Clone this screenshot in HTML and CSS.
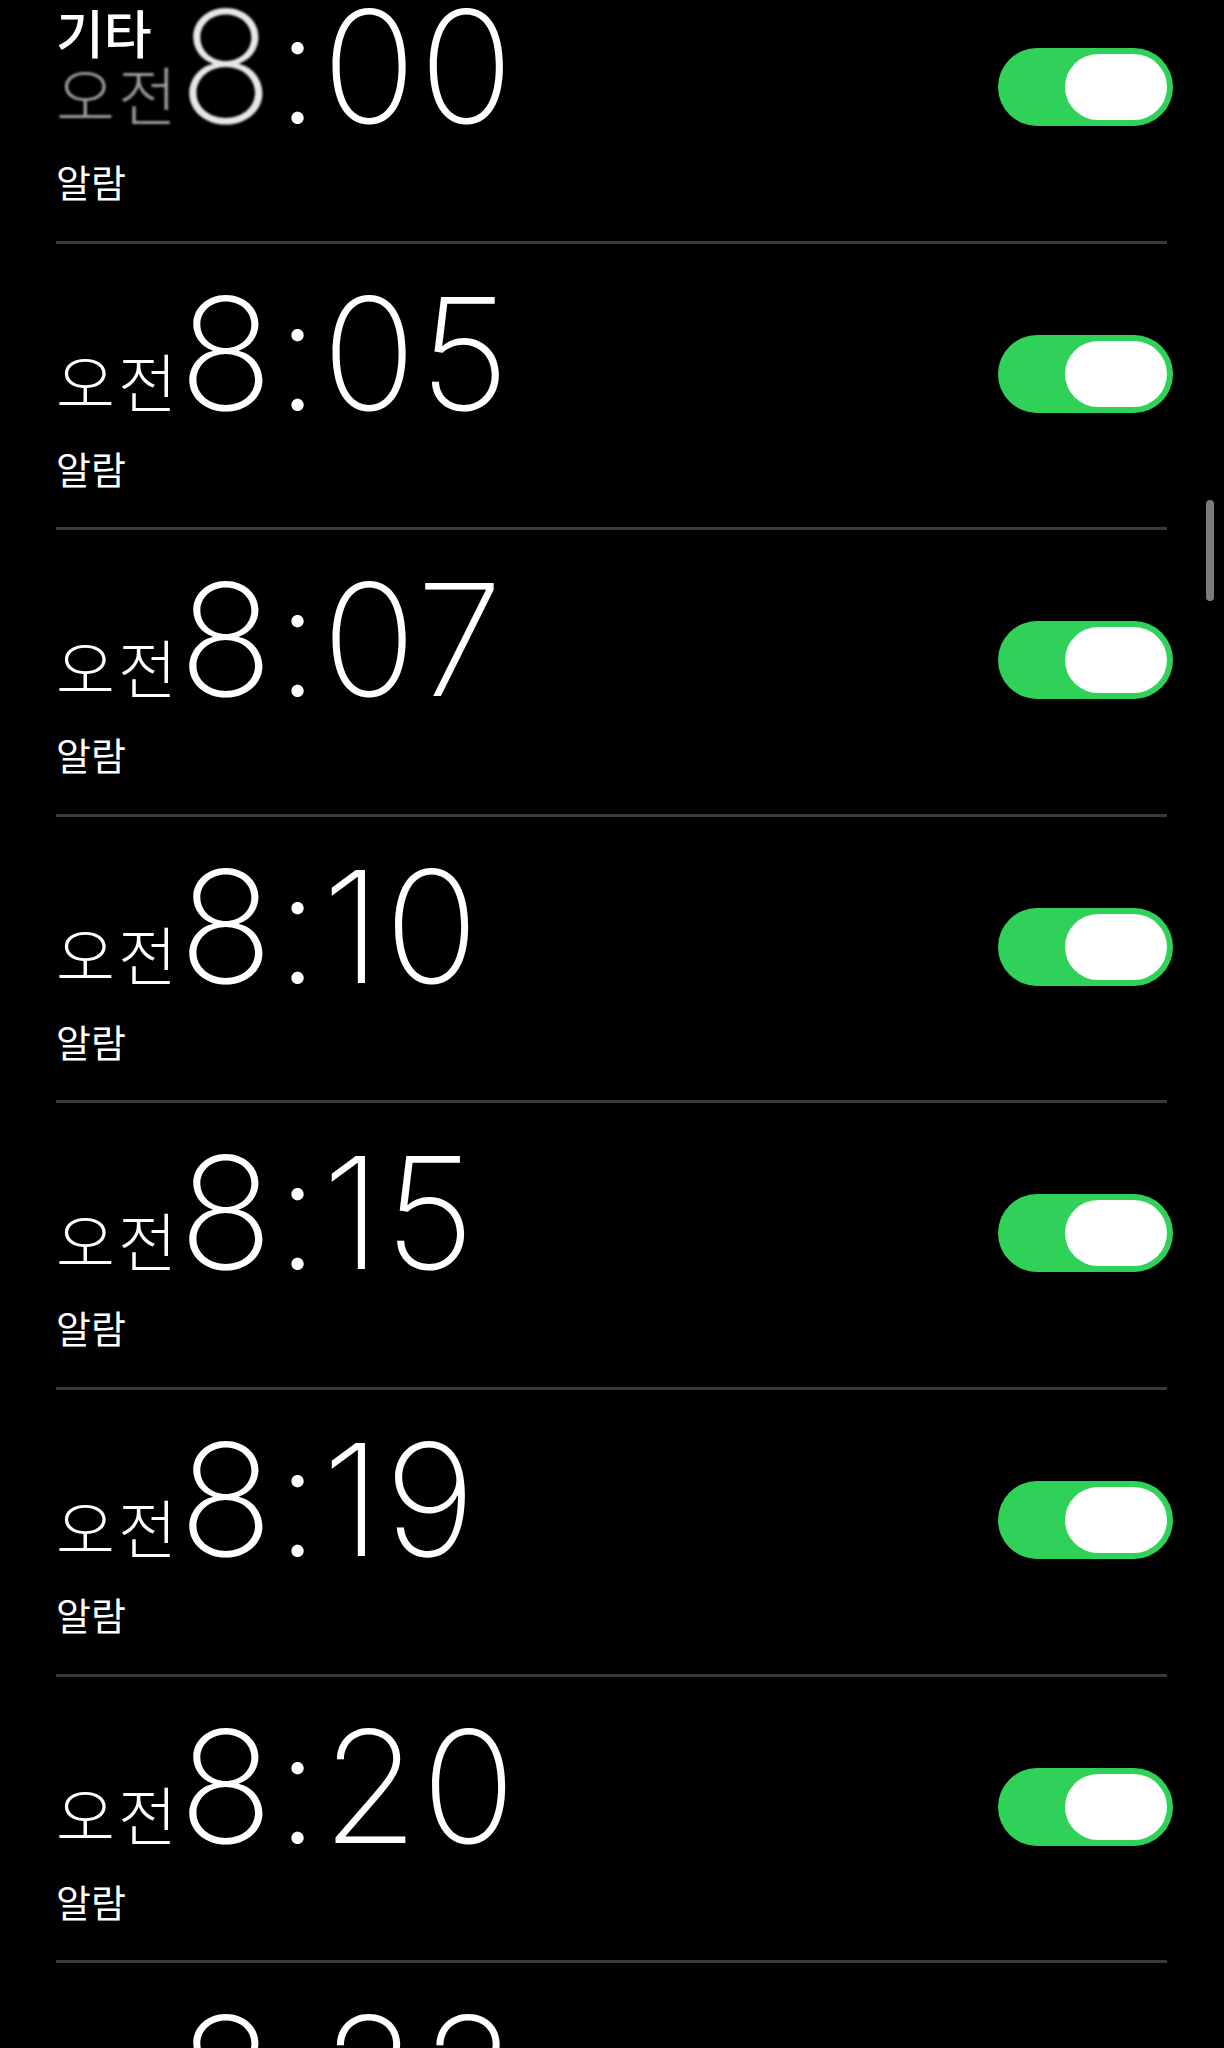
FILE: index.html
```
<!DOCTYPE html>
<html lang="ko">
<head>
    <meta charset="UTF-8">
    <meta name="viewport" content="width=device-width, initial-scale=1.0">
    <title>알람</title>
    <link rel="stylesheet" href="styles.css">
</head>
<body>

    <div class="screen">
        <!-- 고정 섹션 헤더 -->
        <div class="section-header">기타</div>

        <ul class="alarm-list">
            <li class="alarm">
                <div class="alarm-info">
                    <div class="alarm-time">
                        <span class="meridiem dimmed">오전</span>
                        <span class="clock"><span class="blurred">8</span>:00</span>
                    </div>
                    <div class="alarm-label">알람</div>
                </div>
                <span class="switch"><span class="knob"></span></span>
            </li>
            <li class="alarm">
                <div class="alarm-info">
                    <div class="alarm-time">
                        <span class="meridiem">오전</span>
                        <span class="clock">8:05</span>
                    </div>
                    <div class="alarm-label">알람</div>
                </div>
                <span class="switch"><span class="knob"></span></span>
            </li>
            <li class="alarm">
                <div class="alarm-info">
                    <div class="alarm-time">
                        <span class="meridiem">오전</span>
                        <span class="clock">8:07</span>
                    </div>
                    <div class="alarm-label">알람</div>
                </div>
                <span class="switch"><span class="knob"></span></span>
            </li>
            <li class="alarm">
                <div class="alarm-info">
                    <div class="alarm-time">
                        <span class="meridiem">오전</span>
                        <span class="clock">8:10</span>
                    </div>
                    <div class="alarm-label">알람</div>
                </div>
                <span class="switch"><span class="knob"></span></span>
            </li>
            <li class="alarm">
                <div class="alarm-info">
                    <div class="alarm-time">
                        <span class="meridiem">오전</span>
                        <span class="clock">8:15</span>
                    </div>
                    <div class="alarm-label">알람</div>
                </div>
                <span class="switch"><span class="knob"></span></span>
            </li>
            <li class="alarm">
                <div class="alarm-info">
                    <div class="alarm-time">
                        <span class="meridiem">오전</span>
                        <span class="clock">8:19</span>
                    </div>
                    <div class="alarm-label">알람</div>
                </div>
                <span class="switch"><span class="knob"></span></span>
            </li>
            <li class="alarm">
                <div class="alarm-info">
                    <div class="alarm-time">
                        <span class="meridiem">오전</span>
                        <span class="clock">8:20</span>
                    </div>
                    <div class="alarm-label">알람</div>
                </div>
                <span class="switch"><span class="knob"></span></span>
            </li>
            <li class="alarm">
                <div class="alarm-info">
                    <div class="alarm-time">
                        <span class="meridiem">오전</span>
                        <span class="clock">8:22</span>
                    </div>
                    <div class="alarm-label">알람</div>
                </div>
                <span class="switch"><span class="knob"></span></span>
            </li>
        </ul>

        <!-- 스크롤 표시줄 -->
        <div class="scroll-indicator"></div>
    </div>

</body>
</html>
```

FILE: styles.css
```
body {
    margin: 0;
    background-color: #000;
    color: #fff;
    font-family: Inter, "Noto Sans CJK KR", sans-serif;
}

.screen {
    position: relative;
    height: 2048px;
    overflow: hidden;
}

.section-header {
    position: absolute;
    top: 0;
    left: 56px;
    z-index: 2;
    font-family: "Noto Sans CJK KR", sans-serif;
    font-size: 52px;
    font-weight: 500;
    line-height: 64px;
}

.alarm-list {
    list-style: none;
    margin: -43px 0 0;
    padding: 0;
}

.alarm {
    display: flex;
    justify-content: space-between;
    align-items: flex-start;
    margin: 0 57px 0 56px;
    padding: 42px 0 37px;
    border-bottom: 3px solid #3a3a3c;
}

.alarm-time {
    display: flex;
    align-items: flex-end;
}

.meridiem {
    font-family: "Noto Sans CJK KR", sans-serif;
    font-size: 64px;
    font-weight: 300;
    line-height: 1;
    letter-spacing: 3px;
    margin: 0 -1px 10px 0;
}

.clock {
    font-family: Inter, sans-serif;
    font-size: 156px;
    font-weight: 200;
    line-height: 135px;
    letter-spacing: 3px;
}

.alarm-label {
    margin-top: 24px;
    font-family: "Noto Sans CJK KR", sans-serif;
    font-size: 38px;
    line-height: 1.2;
}

/* 헤더 아래로 지나가는 첫 줄 */
.dimmed {
    color: #9c9c9c;
    filter: blur(0.8px);
}

.blurred {
    display: inline-block;
    color: #e6e6e6;
    filter: blur(1px);
}

.switch {
    display: flex;
    justify-content: flex-end;
    align-items: center;
    box-sizing: border-box;
    width: 175px;
    height: 78px;
    margin: 49px -6px 0 0;
    padding: 0 6px;
    border-radius: 39px;
    background-color: #30d158;
}

.knob {
    width: 102px;
    height: 66px;
    border-radius: 33px;
    background-color: #fff;
}

.scroll-indicator {
    position: absolute;
    top: 500px;
    right: 10px;
    width: 8px;
    height: 101px;
    border-radius: 4px;
    background-color: #7a7a7a;
}
```
